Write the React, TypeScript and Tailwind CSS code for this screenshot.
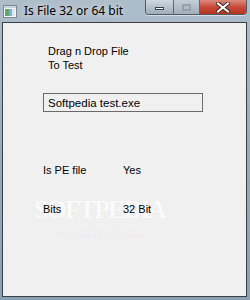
import React from "react";

function AppIcon() {
  return (
    <svg width="14" height="13" viewBox="0 0 14 13">
      <rect x="0.5" y="0.5" width="13" height="12" fill="#f4f6f8" stroke="#7d8a96" />
      <rect x="1" y="1" width="12" height="2" fill="#c9d3dc" />
      <rect x="2" y="4" width="4" height="7" fill="#5aa86a" />
      <rect x="6" y="4" width="3" height="7" fill="#7fb0d8" />
      <rect x="9" y="4" width="3" height="7" fill="#dfe6ec" />
    </svg>
  );
}

function CaptionButtons() {
  return (
    <div className="flex h-[15px] overflow-hidden rounded-b-[4px] border border-t-0 border-[#4f5b66] shadow-[0_1px_0_rgba(255,255,255,0.5)]">
      <div className="flex w-[28px] items-center justify-center border-r border-[#5c6873] bg-gradient-to-b from-[#cfd8e0] to-[#9eadbb]">
        <div className="mt-[3px] h-[3px] w-[9px] border border-[#39424b] bg-white" />
      </div>
      <div className="flex w-[26px] items-center justify-center border-r border-[#5c6873] bg-gradient-to-b from-[#c5ced6] to-[#a2afbb]">
        <div className="h-[7px] w-[9px] border-2 border-[#8c99a5] bg-transparent opacity-80" />
      </div>
      <div className="flex w-[46px] items-center justify-center bg-gradient-to-b from-[#dc8a7c] via-[#c7493a] to-[#b8331f]">
        <svg width="14" height="11" viewBox="0 0 14 11">
          <path
            d="M2 1.5 L12 9.5 M12 1.5 L2 9.5"
            stroke="#3d2a26"
            strokeWidth="4"
            strokeLinecap="square"
          />
          <path
            d="M2 1.5 L12 9.5 M12 1.5 L2 9.5"
            stroke="#ffffff"
            strokeWidth="2"
            strokeLinecap="square"
          />
        </svg>
      </div>
    </div>
  );
}

export default function App() {
  return (
    <div className="flex h-[300px] w-[250px] flex-col bg-gradient-to-b from-[#aebdca] via-[#98abbc] to-[#8aa0b3] pb-[3px] pl-[2px] pr-[3px]">
      <div className="flex h-[22px] items-start">
        <div className="ml-[1px] mt-[5px]">
          <AppIcon />
        </div>
        <span className="ml-[7px] mt-[3px] font-['Noto_Sans',sans-serif] text-[12px] leading-[16px] text-black [text-shadow:0_0_6px_rgba(255,255,255,0.9)]">
          Is File 32 or 64 bit
        </span>
        <div className="ml-auto">
          <CaptionButtons />
        </div>
      </div>
      <div className="relative flex-1 overflow-hidden border border-[#3a3f44] bg-[#f0f0f0] font-['Liberation_Sans',Arial,sans-serif] text-[11px] leading-[14px] text-black">
        {/* watermark sits under the labels */}
        <div className="pointer-events-none absolute left-[31px] top-[174px] z-0 font-['Liberation_Serif',serif] text-[26px] font-bold leading-[26px] tracking-[-2px] text-[#fbfbfb] [text-shadow:0_0_1px_#e2e2e2]">
          SOFTPEDIA
          <span className="ml-[2px] align-top text-[6px] leading-[6px] tracking-normal">™</span>
        </div>
        <div className="pointer-events-none absolute left-[52px] top-[206px] z-0 font-['Liberation_Sans',sans-serif] text-[10px] leading-[12px] text-[#fafafa] [text-shadow:0_0_1px_#cfcfcf]">
          www.softpedia.com
        </div>
        <div className="relative z-10">
          <div className="pl-[45px] pt-[21px]">
            <div>Drag n Drop File</div>
            <div>To Test</div>
          </div>
          <div className="ml-[40px] mt-[21px] flex h-[19px] w-[160px] items-center border border-[#6a6a6a] pl-[4px] text-[11.5px]">
            Softpedia test.exe
          </div>
          <div className="ml-[40px] mt-[51px] flex">
            <span className="w-[80px]">Is PE file</span>
            <span>Yes</span>
          </div>
          <div className="ml-[40px] mt-[25px] flex">
            <span className="w-[80px]">Bits</span>
            <span>32 Bit</span>
          </div>
        </div>
      </div>
    </div>
  );
}
